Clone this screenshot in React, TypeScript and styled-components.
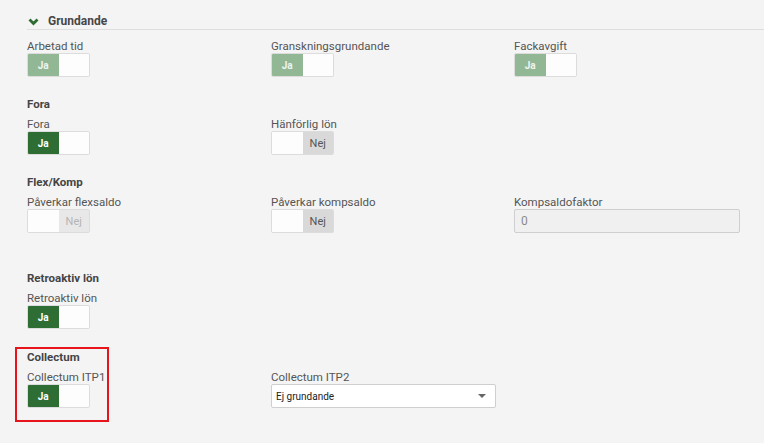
import styled, { createGlobalStyle } from 'styled-components';

const GlobalStyle = createGlobalStyle`
  body {
    margin: 0;
    background: #f4f4f4;
    font-family: Roboto, "Liberation Sans", sans-serif;
  }
`;

type ToggleProps = { on: boolean; disabled?: boolean };

const Toggle = ({ on, disabled }: ToggleProps) => (
  <ToggleBox>
    {on ? (
      <>
        <OnHalf $disabled={disabled}>Ja</OnHalf>
        <BlankHalf />
      </>
    ) : (
      <>
        <BlankHalf />
        <OffHalf $disabled={disabled}>Nej</OffHalf>
      </>
    )}
  </ToggleBox>
);

const Chevron = () => (
  <svg width="11" height="8" viewBox="0 0 11 8">
    <polyline points="1.5,1.5 5.5,5.5 9.5,1.5" fill="none" stroke="#2e6b33" strokeWidth="2.8" />
  </svg>
);

export default function App() {
  return (
    <>
      <GlobalStyle />
      <Page>
        <Header>
          <Chevron />
          <HeaderTitle>Grundande</HeaderTitle>
        </Header>

        <Section $first>
          <Row>
            <Field>
              <Label>Arbetad tid</Label>
              <Toggle on disabled />
            </Field>
            <Field>
              <Label>Granskningsgrundande</Label>
              <Toggle on disabled />
            </Field>
            <Field>
              <Label>Fackavgift</Label>
              <Toggle on disabled />
            </Field>
          </Row>
        </Section>

        <Section>
          <SectionTitle>Fora</SectionTitle>
          <Row>
            <Field>
              <Label>Fora</Label>
              <Toggle on />
            </Field>
            <Field>
              <Label>Hänförlig lön</Label>
              <Toggle on={false} />
            </Field>
          </Row>
        </Section>

        <Section $extra={18}>
          <SectionTitle>Flex/Komp</SectionTitle>
          <Row>
            <Field>
              <Label>Påverkar flexsaldo</Label>
              <Toggle on={false} disabled />
            </Field>
            <Field>
              <Label>Påverkar kompsaldo</Label>
              <Toggle on={false} />
            </Field>
            <Field>
              <Label>Kompsaldofaktor</Label>
              <TextInput value="0" readOnly disabled />
            </Field>
          </Row>
        </Section>

        <Section $extra={1}>
          <SectionTitle>Retroaktiv lön</SectionTitle>
          <Row>
            <Field>
              <Label>Retroaktiv lön</Label>
              <Toggle on />
            </Field>
          </Row>
        </Section>

        <Section>
          <Highlight />
          <SectionTitle>Collectum</SectionTitle>
          <Row>
            <Field>
              <Label>Collectum ITP1</Label>
              <Toggle on />
            </Field>
            <Field>
              <Label>Collectum ITP2</Label>
              <Select>
                <span>Ej grundande</span>
                <Caret />
              </Select>
            </Field>
          </Row>
        </Section>
      </Page>
    </>
  );
}

const Page = styled.div`
  padding: 0 0 40px 27px;
  color: #555;
`;

const Header = styled.div`
  display: flex;
  align-items: center;
  gap: 9px;
  padding: 14px 0 0 1px;
  height: 15px;
  border-bottom: 1px solid #dedede;
  box-sizing: content-box;
`;

const HeaderTitle = styled.span`
  font-size: 12px;
  font-weight: 700;
  color: #474747;
  line-height: 15px;
`;

const Section = styled.div<{ $extra?: number; $first?: boolean }>`
  position: relative;
  padding-top: ${(p) => (p.$first ? 10 : 20)}px;
  padding-bottom: ${(p) => p.$extra ?? 0}px;
`;

const SectionTitle = styled.div`
  font-size: 11.5px;
  font-weight: 700;
  color: #444;
  line-height: 14px;
  margin-bottom: 7px;
`;

const Row = styled.div`
  display: grid;
  grid-template-columns: 244px 243px 226px;
`;

const Field = styled.div`
  display: flex;
  flex-direction: column;
  align-items: flex-start;
`;

const Label = styled.label`
  font-size: 11.5px;
  line-height: 13px;
  color: #555;
`;

const ToggleBox = styled.div`
  display: flex;
  width: 63px;
  height: 24px;
  border: 1px solid #dcdcdc;
  border-radius: 2px;
  box-sizing: border-box;
  overflow: hidden;
`;

const Half = styled.div`
  flex: 1;
  display: flex;
  align-items: center;
  justify-content: center;
  font-size: 10px;
`;

const OnHalf = styled(Half)<{ $disabled?: boolean }>`
  background: ${(p) => (p.$disabled ? '#92b795' : '#2e6e35')};
  color: ${(p) => (p.$disabled ? '#eef4ee' : '#ffffff')};
  font-weight: 700;
`;

const OffHalf = styled(Half)<{ $disabled?: boolean }>`
  background: ${(p) => (p.$disabled ? '#e8e8e8' : '#d9d9d9')};
  color: ${(p) => (p.$disabled ? '#b5b5b5' : '#555')};
  font-size: 11px;
`;

const BlankHalf = styled(Half)`
  background: #fdfdfd;
`;

const TextInput = styled.input`
  width: 226px;
  height: 24px;
  box-sizing: border-box;
  border: 1px solid #cfcfcf;
  border-radius: 2px;
  background: #f0f0f0;
  padding: 0 6px;
  font-family: Roboto, "Liberation Sans", sans-serif;
  font-size: 12px;
  color: #8a8a8a;
`;

const Select = styled.div`
  display: flex;
  align-items: center;
  justify-content: space-between;
  width: 225px;
  height: 24px;
  box-sizing: border-box;
  border: 1px solid #cfcfcf;
  border-radius: 2px;
  background: #fff;
  padding: 0 9px 0 4px;
  font-size: 10px;
  color: #222;
`;

const Caret = styled.span`
  width: 0;
  height: 0;
  border-left: 4px solid transparent;
  border-right: 4px solid transparent;
  border-top: 4px solid #666;
`;

const Highlight = styled.div`
  position: absolute;
  top: 17px;
  left: -12px;
  width: 94px;
  height: 75px;
  border: 2px solid #e8141b;
  box-sizing: border-box;
  pointer-events: none;
`;
